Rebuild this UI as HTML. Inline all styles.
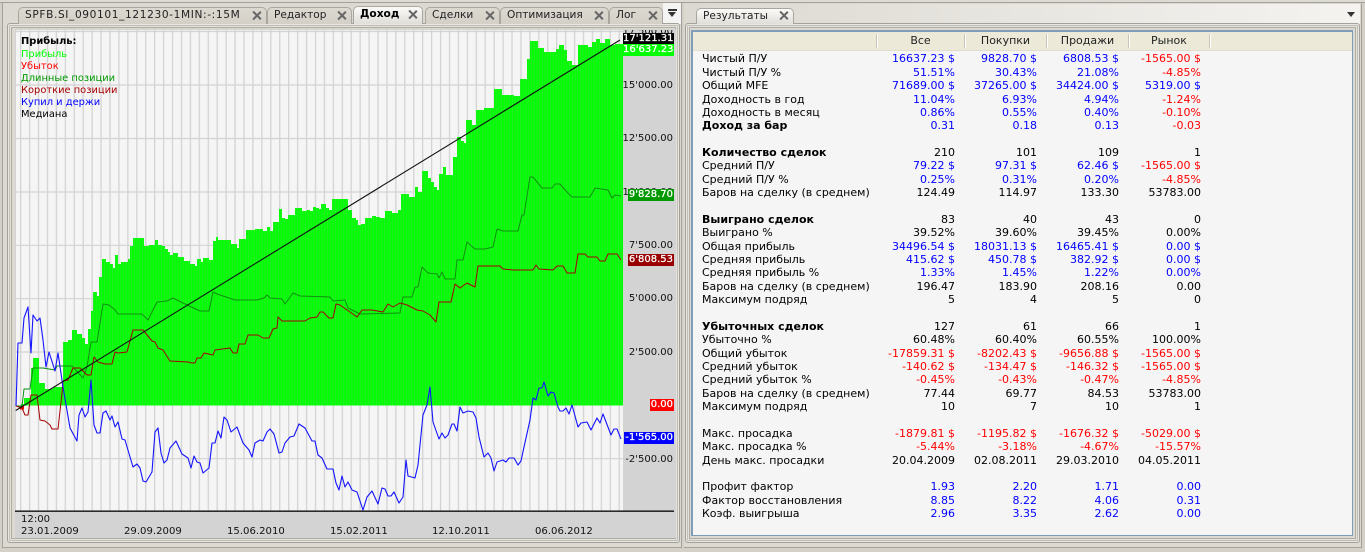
<!DOCTYPE html>
<html lang="ru"><head><meta charset="utf-8"><title>Результаты</title>
<style>
html,body{margin:0;padding:0;width:1365px;height:552px;overflow:hidden;background:#d4d0c8}
body{position:relative;font-family:"DejaVu Sans","Liberation Sans",sans-serif;font-size:11px;color:#000}
div{box-sizing:border-box}
.a{position:absolute}
.tab{position:absolute;top:7px;height:17px;background:linear-gradient(#dcd9d1,#d4d0c8);border:1px solid #a8a69e;border-bottom:0;border-radius:5px 5px 0 0;font-size:10.6px;line-height:15px;padding-left:6px;white-space:nowrap;color:#222}
.tab.on{top:6px;height:18px;background:linear-gradient(#fafaf8,#e0ded8);font-weight:bold;color:#000;z-index:2}
.x{position:absolute;top:3px;right:5px;width:9px;height:9px}
.x:before,.x:after{content:"";position:absolute;left:4px;top:-1px;width:1.6px;height:11px;background:#666;transform:rotate(45deg)}
.x:after{transform:rotate(-45deg)}
.frame{position:absolute;border:1px solid #a3a199;border-radius:3px;box-shadow:inset 0 0 0 1px #e8e6e0,inset 0 0 0 2px #c0bdb4,inset 0 0 0 3px #e4e2dc,inset 0 0 0 4px #aeaca3}
.r{position:absolute;left:702px;height:14px;line-height:14px;display:grid;grid-template-columns:160px 93px 82px 82px 82px;white-space:nowrap}
.r i{font-style:normal;text-align:right}
.b{color:#0000ff}.d{color:#ff0000}
.h{position:absolute;top:34px;height:14px;line-height:14px;text-align:center;color:#222}
.s{position:absolute;top:34px;width:2px;height:14px;background:#fff;border-left:1px solid #c9c6b8}
.lg{position:absolute;left:21px;font-size:9.9px;line-height:12px;white-space:nowrap}
.ax{position:absolute;right:692px;font-size:10px;line-height:12px;white-space:nowrap;color:#111}
.box{position:absolute;right:691px;height:12px;line-height:12px;font-size:10px;color:#fff;font-weight:normal;white-space:nowrap;text-align:right;padding-right:1px;-webkit-text-stroke:.25px #fff}
.dt{position:absolute;top:526px;font-size:10.1px;line-height:12px;white-space:nowrap;color:#111}
</style></head><body>

<div class="a" style="left:0;top:0;width:1365px;height:2px;background:#dddad3"></div>
<div class="a" style="left:0;top:2px;width:1365px;height:1px;background:#a3a199"></div>
<div class="a" style="left:2px;top:2px;width:1px;height:546px;background:#a3a199"></div>
<div class="a" style="left:3px;top:3px;width:678px;height:544px;background:#dcd9d2"></div>

<!-- left panel -->
<div class="a" style="left:663px;top:3px;width:18px;height:21px;background:#f4f4f4"></div>
<div class="a" style="left:668px;top:9px;width:9px;height:2px;background:#333"></div>
<div class="a" style="left:668px;top:12px;width:0;height:0;border:4.5px solid transparent;border-top:5px solid #333;border-bottom:0"></div>
<div class="frame" style="left:7px;top:23px;width:673px;height:520px"></div>
<div class="a" style="left:2px;top:547px;width:680px;height:1px;background:#a3a199"></div>
<div class="a" style="left:681px;top:3px;width:1px;height:545px;background:#a3a199"></div>

<div class="tab" style="left:18px;width:249px;letter-spacing:.62px">SPFB.SI_090101_121230-1MIN:-:15M<span class="x"></span></div>
<div class="tab" style="left:267px;width:85px">Редактор<span class="x"></span></div>
<div class="tab on" style="left:353px;width:70px">Доход<span class="x"></span></div>
<div class="tab" style="left:425px;width:75px">Сделки<span class="x"></span></div>
<div class="tab" style="left:500px;width:109px">Оптимизация<span class="x"></span></div>
<div class="tab" style="left:609px;width:54px">Лог<span class="x"></span></div>

<!-- chart -->
<div class="a" style="left:15px;top:29px;width:661px;height:509px;background:#d3d3d3"></div>
<svg class="a" style="left:0;top:0" width="1365" height="552" viewBox="0 0 1365 552">
<defs>
<pattern id="g" patternUnits="userSpaceOnUse" x="20" y="0" width="8.934" height="600"><rect x="0" y="0" width="1.3" height="600" fill="#d3d3d3"/></pattern>
<pattern id="p" patternUnits="userSpaceOnUse" x="20.5" y="0" width="2.72" height="600"><rect width="2.72" height="600" fill="#00ff00"/><rect x="1.9" width="0.82" height="600" fill="#2ce82c"/></pattern>
</defs>
<rect x="16" y="30" width="607" height="481" fill="#f5f5f5"/>
<rect x="16" y="30" width="607" height="481" fill="url(#g)"/>
<g stroke="#d3d3d3" stroke-width="1.2"><path d="M16 31.5H623M16 85H623M16 138.5H623M16 192H623M16 245.3H623M16 298.7H623M16 352H623M16 458.7H623"/></g>
<path fill="url(#p)" d="M21 405.5V404H24V398H29V398H31V368H33V358H39V383H45V389H53V387H63V342H68V340H72V330H77V334H82V338H85V344H88V329H91V311H93V292H97V296H99V277H102V259H106V262H110V264H113V268H115V255H118V264H121V262H128V259H130V246H133V238H144V246H149V245H155V240H158V245H162V246H165V249H168V252H170V255H173V253H178V257H184V261H190V264H195V266H197V259H201V262H203V258H209V260H213V241H216V237H218V240H231V244H237V248H239V239H246V230H255V229H263V231H267V227H270V231H273V222H279V209H282V218H285V219H288V215H295V208H302V211H307V210H310V211H313V207H316V208H319V209H321V204H326V208H329V210H332V199H348V210H352V218H356V220H358V225H361V224H365V218H372V216H376V217H380V218H385V211H392V213H398V210H401V194H409V197H415V187H418V192H422V171H428V178H431V182H434V187H437V190H439V174H443V167H446V175H453V157H457V137H461V141H464V143H466V120H472V125H476V110H484V108H494V89H502V95H514V96H520V79H527V59H530V41H538V48H544V52H556V49H559V45H564V50H567V61H572V65H578V45H588V47H592V42H596V39H600V43H605V39H610V45H615V44H623V405.5Z"/>
<rect x="20" y="405.5" width="4" height="4" fill="#ff0000"/>
<g fill="none" stroke-linejoin="round">
<polyline stroke="#0f8f0f" stroke-width="1" points="16,406 22,406 24,389 30,389 33,368 43,368 55,370 57,366 72,366 83,378 87,367 91,342 97,342 103,304 109,305 115,310 118,314 142,314 148,320 157,302 167,301 173,298 187,305 200,311 209,311 213,292 217,294 235,300 257,300 264,298 267,295 270,298 282,299 285,304 293,293 300,296 330,297 333,301 345,300 348,308 360,314 400,313 403,297 412,297 415,287 418,287 422,267 428,273 437,274 439,278 442,272 445,279 455,279 457,260 463,260 467,242 475,249 485,249 493,247 497,229 503,231 518,231 522,215 524,215 530,177 533,177 542,188 552,188 555,184 560,184 567,192 572,197 590,197 595,188 608,190 612,198 615,195 621,196"/>
<polyline stroke="#a50000" stroke-width="1" points="16,406 22,408 25,415 28,415 31,395 37,395 40,420 45,421 50,425 52,429 58,429 62,393 63,381 68,380 73,368 80,368 87,375 91,375 94,357 98,362 105,364 112,364 115,352 118,353 127,352 133,330 143,330 152,341 155,342 158,348 163,350 170,361 188,362 192,363 195,363 197,358 201,358 204,353 213,355 215,350 230,348 233,353 237,353 239,344 245,344 248,335 258,335 263,338 269,338 273,329 277,328 278,317 282,321 305,321 310,318 317,317 320,312 323,312 329,318 333,318 336,304 340,305 350,312 357,317 362,310 372,310 383,312 388,304 393,307 400,303 407,305 417,310 423,311 430,315 436,322 439,302 451,302 455,284 460,288 467,283 475,287 478,266 500,266 503,269 513,270 533,270 536,265 539,269 553,270 557,266 563,266 567,273 575,273 578,254 585,254 588,257 597,257 600,261 605,261 608,254 617,254 621,260"/>
<polyline stroke="#1414ff" stroke-width="1.1" points="16,406 18,343 22,343 24,318 28,307 31,353 33,315 37,321 40,318 43,340 46,367 49,352 55,371 58,353 63,387 70,428 77,441 79,415 82,408 85,417 88,412 91,380 94,425 97,433 100,433 103,413 106,411 110,420 112,416 115,427 118,422 122,439 125,440 133,467 137,464 140,468 143,481 146,482 152,472 155,432 158,428 161,453 164,463 167,460 170,448 176,441 182,454 188,458 191,468 194,456 197,462 200,463 203,473 209,468 212,443 215,443 218,431 221,438 224,417 227,420 231,432 237,427 243,443 249,450 252,457 255,443 260,440 263,441 267,432 270,429 274,434 279,453 282,452 285,443 290,437 294,436 299,424 305,428 312,441 315,441 318,455 322,458 327,469 333,469 336,483 339,490 342,476 345,487 348,482 352,490 357,492 363,510 367,497 372,491 378,504 382,488 385,489 388,496 391,496 394,492 399,503 403,497 406,460 408,476 415,478 418,465 423,415 427,405 430,387 433,422 439,439 442,433 445,438 448,435 452,424 454,424 457,431 460,407 463,413 468,411 473,412 476,418 479,437 484,457 488,453 491,458 494,471 497,462 503,460 506,462 509,458 514,458 518,465 521,461 524,447 530,420 533,398 536,400 539,388 542,388 544,382 548,396 551,392 554,393 558,407 560,411 563,411 566,408 569,414 572,405 578,427 581,423 587,422 591,430 597,418 600,423 603,414 611,435 614,429 617,429 621,439"/>
<line x1="15.7" y1="410.5" x2="620" y2="40" stroke="#111" stroke-width="1.1"/>
</g>
<rect x="15" y="510.5" width="659" height="1.3" fill="#000"/>
</svg>

<div class="lg" style="top:36px;font-weight:bold">Прибыль:</div>
<div class="lg" style="top:49px;color:#00ff00">Прибыль</div>
<div class="lg" style="top:61px;color:#ff0000">Убыток</div>
<div class="lg" style="top:73px;color:#009900">Длинные позиции</div>
<div class="lg" style="top:85px;color:#a50000">Короткие позиции</div>
<div class="lg" style="top:97px;color:#0000ff">Купил и держи</div>
<div class="lg" style="top:109px">Медиана</div>

<div class="ax" style="top:26px;clip-path:inset(4px 0 0 0)">17'500.00</div>
<div class="ax" style="top:80px">15'000.00</div>
<div class="ax" style="top:133px">12'500.00</div>
<div class="ax" style="top:187px">10'000.00</div>
<div class="ax" style="top:240px">7'500.00</div>
<div class="ax" style="top:293px">5'000.00</div>
<div class="ax" style="top:347px">2'500.00</div>
<div class="ax" style="top:454px">-2'500.00</div>
<div class="box" style="top:33px;width:51px;background:#000">17'121.31</div>
<div class="box" style="top:44px;width:51px;background:#00ff00">16'637.23</div>
<div class="box" style="top:189px;width:46px;background:#009900">9'828.70</div>
<div class="box" style="top:254px;width:46px;background:#990000">6'808.53</div>
<div class="box" style="top:399px;width:24px;background:#ff0000">0.00</div>
<div class="box" style="top:432px;width:50px;background:#0000ff">-1'565.00</div>

<div class="dt" style="left:21px;top:514px">12:00</div>
<div class="dt" style="left:21px">23.01.2009</div>
<div class="dt" style="left:124px">29.09.2009</div>
<div class="dt" style="left:227px">15.06.2010</div>
<div class="dt" style="left:330px">15.02.2011</div>
<div class="dt" style="left:432px">12.10.2011</div>
<div class="dt" style="left:535px">06.06.2012</div>

<!-- right panel -->
<div class="a" style="left:684px;top:3px;width:677px;height:544px;background:#dcd9d2"></div>
<div class="a" style="left:695px;top:4px;width:665px;height:20px;background:linear-gradient(90deg,#dcd9d1,#f4f3f0)"></div>
<div class="a" style="left:1347px;top:12px;width:0;height:0;border:4px solid transparent;border-top:5px solid #333;border-bottom:0"></div>
<div class="frame" style="left:685px;top:23px;width:675px;height:520px"></div>
<div class="a" style="left:1361px;top:3px;width:1px;height:545px;background:#a3a199"></div>
<div class="a" style="left:684px;top:547px;width:678px;height:1px;background:#a3a199"></div>
<div class="tab on" style="left:696px;top:8px;height:16px;width:98px;font-weight:normal;color:#222;line-height:14px">Результаты<span class="x" style="top:2px"></span></div>

<div class="a" style="left:691px;top:30px;width:662px;height:506px;background:#f5f5f5;border:1px solid #7f9db9;border-width:2px 1px 1px 2px"></div>
<div class="a" style="left:693px;top:32px;width:659px;height:18px;background:#ece9d8"></div>
<div class="a" style="left:693px;top:50px;width:659px;height:1px;background:#e0ddd0"></div>
<div class="s" style="left:876px"></div><div class="s" style="left:964px"></div><div class="s" style="left:1046px"></div><div class="s" style="left:1128px"></div><div class="s" style="left:1209px"></div>
<div class="h" style="left:877px;width:87px">Все</div>
<div class="h" style="left:965px;width:81px">Покупки</div>
<div class="h" style="left:1047px;width:81px">Продажи</div>
<div class="h" style="left:1129px;width:80px">Рынок</div>

<div class="r" style="top:52px"><span>Чистый П/У</span><i class="b">16637.23 $</i><i class="b">9828.70 $</i><i class="b">6808.53 $</i><i class="d">-1565.00 $</i></div>
<div class="r" style="top:66px"><span>Чистый П/У %</span><i class="b">51.51%</i><i class="b">30.43%</i><i class="b">21.08%</i><i class="d">-4.85%</i></div>
<div class="r" style="top:79px"><span>Общий MFE</span><i class="b">71689.00 $</i><i class="b">37265.00 $</i><i class="b">34424.00 $</i><i class="b">5319.00 $</i></div>
<div class="r" style="top:93px"><span>Доходность в год</span><i class="b">11.04%</i><i class="b">6.93%</i><i class="b">4.94%</i><i class="d">-1.24%</i></div>
<div class="r" style="top:106px"><span>Доходность в месяц</span><i class="b">0.86%</i><i class="b">0.55%</i><i class="b">0.40%</i><i class="d">-0.10%</i></div>
<div class="r" style="top:119px"><span><b>Доход за бар</b></span><i class="b">0.31</i><i class="b">0.18</i><i class="b">0.13</i><i class="d">-0.03</i></div>

<div class="r" style="top:146px"><span><b>Количество сделок</b></span><i>210</i><i>101</i><i>109</i><i>1</i></div>
<div class="r" style="top:159px"><span>Средний П/У</span><i class="b">79.22 $</i><i class="b">97.31 $</i><i class="b">62.46 $</i><i class="d">-1565.00 $</i></div>
<div class="r" style="top:173px"><span>Средний П/У %</span><i class="b">0.25%</i><i class="b">0.31%</i><i class="b">0.20%</i><i class="d">-4.85%</i></div>
<div class="r" style="top:186px"><span>Баров на сделку (в среднем)</span><i>124.49</i><i>114.97</i><i>133.30</i><i>53783.00</i></div>

<div class="r" style="top:213px"><span><b>Выиграно сделок</b></span><i>83</i><i>40</i><i>43</i><i>0</i></div>
<div class="r" style="top:226px"><span>Выиграно %</span><i>39.52%</i><i>39.60%</i><i>39.45%</i><i>0.00%</i></div>
<div class="r" style="top:240px"><span>Общая прибыль</span><i class="b">34496.54 $</i><i class="b">18031.13 $</i><i class="b">16465.41 $</i><i class="b">0.00 $</i></div>
<div class="r" style="top:253px"><span>Средняя прибыль</span><i class="b">415.62 $</i><i class="b">450.78 $</i><i class="b">382.92 $</i><i class="b">0.00 $</i></div>
<div class="r" style="top:266px"><span>Средняя прибыль %</span><i class="b">1.33%</i><i class="b">1.45%</i><i class="b">1.22%</i><i class="b">0.00%</i></div>
<div class="r" style="top:280px"><span>Баров на сделку (в среднем)</span><i>196.47</i><i>183.90</i><i>208.16</i><i>0.00</i></div>
<div class="r" style="top:293px"><span>Максимум подряд</span><i>5</i><i>4</i><i>5</i><i>0</i></div>

<div class="r" style="top:320px"><span><b>Убыточных сделок</b></span><i>127</i><i>61</i><i>66</i><i>1</i></div>
<div class="r" style="top:333px"><span>Убыточно %</span><i>60.48%</i><i>60.40%</i><i>60.55%</i><i>100.00%</i></div>
<div class="r" style="top:347px"><span>Общий убыток</span><i class="d">-17859.31 $</i><i class="d">-8202.43 $</i><i class="d">-9656.88 $</i><i class="d">-1565.00 $</i></div>
<div class="r" style="top:360px"><span>Средний убыток</span><i class="d">-140.62 $</i><i class="d">-134.47 $</i><i class="d">-146.32 $</i><i class="d">-1565.00 $</i></div>
<div class="r" style="top:373px"><span>Средний убыток %</span><i class="d">-0.45%</i><i class="d">-0.43%</i><i class="d">-0.47%</i><i class="d">-4.85%</i></div>
<div class="r" style="top:387px"><span>Баров на сделку (в среднем)</span><i>77.44</i><i>69.77</i><i>84.53</i><i>53783.00</i></div>
<div class="r" style="top:400px"><span>Максимум подряд</span><i>10</i><i>7</i><i>10</i><i>1</i></div>

<div class="r" style="top:427px"><span>Макс. просадка</span><i class="d">-1879.81 $</i><i class="d">-1195.82 $</i><i class="d">-1676.32 $</i><i class="d">-5029.00 $</i></div>
<div class="r" style="top:440px"><span>Макс. просадка %</span><i class="d">-5.44%</i><i class="d">-3.18%</i><i class="d">-4.67%</i><i class="d">-15.57%</i></div>
<div class="r" style="top:454px"><span>День макс. просадки</span><i>20.04.2009</i><i>02.08.2011</i><i>29.03.2010</i><i>04.05.2011</i></div>

<div class="r" style="top:480px"><span>Профит фактор</span><i class="b">1.93</i><i class="b">2.20</i><i class="b">1.71</i><i class="b">0.00</i></div>
<div class="r" style="top:494px"><span>Фактор восстановления</span><i class="b">8.85</i><i class="b">8.22</i><i class="b">4.06</i><i class="b">0.31</i></div>
<div class="r" style="top:507px"><span>Коэф. выигрыша</span><i class="b">2.96</i><i class="b">3.35</i><i class="b">2.62</i><i class="b">0.00</i></div>
</body></html>
